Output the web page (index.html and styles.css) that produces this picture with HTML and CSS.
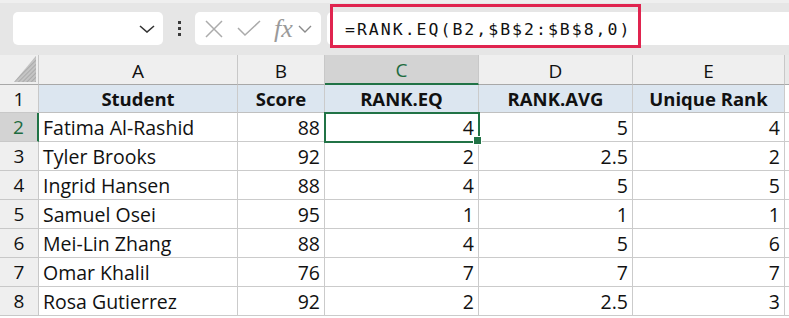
FILE: index.html
```html
<!DOCTYPE html>
<html>
<head>
<meta charset="utf-8">
<link rel="stylesheet" href="styles.css">
</head>
<body>
<div class="toolbar">
  <div class="namebox">
    <svg class="chev" width="16" height="8" viewBox="0 0 16 8"><path d="M1 1 L8 7 L15 1" fill="none" stroke="#333" stroke-width="1.6"/></svg>
  </div>
  <div class="dots"><i></i><i></i><i></i></div>
  <div class="fxgroup">
    <svg width="20" height="20" viewBox="0 0 20 20"><path d="M2 2 L18 18 M18 2 L2 18" stroke="#ababab" stroke-width="1.5" fill="none"/></svg>
    <svg width="24" height="20" viewBox="0 0 24 20"><path d="M1 9 L8 16 L23 2" stroke="#ababab" stroke-width="1.5" fill="none"/></svg>
    <span class="fx">fx</span>
    <svg width="14" height="8" viewBox="0 0 14 8"><path d="M1 1 L7 7 L13 1" fill="none" stroke="#8a8a8a" stroke-width="1.4"/></svg>
  </div>
  <div class="formula">
    <span class="ftext">=RANK.EQ(B2,$B$2:$B$8,0)</span>
    <div class="highlight"></div>
  </div>
</div>
<div class="sheet">
  <div class="corner"><svg width="22" height="26" viewBox="0 0 22 26"><defs><pattern id="h" width="3" height="3" patternUnits="userSpaceOnUse" patternTransform="rotate(45)"><rect width="3" height="3" fill="#c4c4c4"/><rect width="1" height="3" fill="#ababab"/></pattern></defs><path d="M22 0 L22 26 L0 26 Z" fill="url(#h)"/></svg></div>
  <div class="ch">A</div><div class="ch">B</div><div class="ch sel">C</div><div class="ch">D</div><div class="ch">E</div><div class="ch end"></div>

  <div class="rh">1</div>
  <div class="c hd">Student</div><div class="c hd">Score</div><div class="c hd">RANK.EQ</div><div class="c hd">RANK.AVG</div><div class="c hd">Unique Rank</div><div class="c end"></div>

  <div class="rh sel">2</div>
  <div class="c">Fatima Al-Rashid</div><div class="c n">88</div><div class="c n active">4</div><div class="c n">5</div><div class="c n">4</div><div class="c end"></div>

  <div class="rh">3</div>
  <div class="c">Tyler Brooks</div><div class="c n">92</div><div class="c n">2</div><div class="c n">2.5</div><div class="c n">2</div><div class="c end"></div>

  <div class="rh">4</div>
  <div class="c">Ingrid Hansen</div><div class="c n">88</div><div class="c n">4</div><div class="c n">5</div><div class="c n">5</div><div class="c end"></div>

  <div class="rh">5</div>
  <div class="c">Samuel Osei</div><div class="c n">95</div><div class="c n">1</div><div class="c n">1</div><div class="c n">1</div><div class="c end"></div>

  <div class="rh">6</div>
  <div class="c">Mei-Lin Zhang</div><div class="c n">88</div><div class="c n">4</div><div class="c n">5</div><div class="c n">6</div><div class="c end"></div>

  <div class="rh">7</div>
  <div class="c">Omar Khalil</div><div class="c n">76</div><div class="c n">7</div><div class="c n">7</div><div class="c n">7</div><div class="c end"></div>

  <div class="rh">8</div>
  <div class="c">Rosa Gutierrez</div><div class="c n">92</div><div class="c n">2</div><div class="c n">2.5</div><div class="c n">3</div><div class="c end"></div>
</div>
</body>
</html>
```
FILE: styles.css
```css
* { box-sizing: border-box; }
html, body { margin: 0; padding: 0; background: #ffffff; }
body { width: 789px; height: 318px; overflow: hidden; font-family: "Open Sans", Lato, sans-serif; }

.toolbar {
  height: 55px;
  background: #e6e6e6;
  border-top: 3px solid #efefef;
  display: flex;
  align-items: flex-start;
  padding-top: 9px;
  padding-left: 13px;
}
.namebox {
  width: 150px; height: 33px;
  background: #fff;
  border-radius: 5px;
  display: flex; align-items: center; justify-content: flex-end;
  padding-right: 8px;
}
.dots {
  width: 32px; height: 33px;
  display: flex; flex-direction: column; align-items: center; justify-content: center; gap: 3px;
}
.dots i { display: block; width: 3px; height: 3px; background: #3a3a3a; }
.fxgroup {
  width: 126px; height: 33px;
  background: #fff;
  border-radius: 5px;
  display: flex; align-items: center;
  padding-left: 9px; gap: 0;
}
.fxgroup svg:nth-child(1) { margin-right: 13px; }
.fxgroup svg:nth-child(2) { margin-right: 13px; }
.fx {
  font-family: "Liberation Serif", "DejaVu Serif", serif;
  font-style: italic;
  font-size: 26px;
  color: #9a9a9a;
  margin-right: 5px;
  line-height: 20px;
}
.formula {
  position: relative;
  flex: 1;
  margin-left: 6px;
  height: 33px;
  background: #fff;
  border-radius: 5px 0 0 5px;
  display: flex; align-items: center;
}
.ftext {
  font-family: "DejaVu Sans Mono", "Liberation Mono", monospace;
  font-size: 16.5px;
  letter-spacing: 2px;
  color: #111;
  margin-left: 18px;
  padding-top: 1px;
}
.highlight {
  position: absolute;
  left: 3px; top: -8px;
  width: 311px; height: 44px;
  border: 3px solid #e0244f;
}

.sheet {
  display: grid;
  grid-template-columns: 39px 199px 87px 154px 154px 152px 4px;
  grid-template-rows: 30px 28px repeat(7, 29px);
  font-size: 19.5px;
  color: #111;
}
.corner, .ch, .rh {
  background: #efefef;
  border-right: 1px solid #c8c8c8;
  border-bottom: 1px solid #c8c8c8;
}
.corner { display: flex; align-items: flex-end; justify-content: flex-end; padding: 0 2px 2px 0; border-bottom: 1px solid #a8a8a8; }
.ch {
  display: flex; align-items: center; justify-content: center;
  font-size: 19px; color: #111; padding-top: 2px;
  border-bottom: 1px solid #a8a8a8;
}
.ch.sel { background: #d3d3d3; color: #1d6b40; border-bottom: 2px solid #217346; }
.ch.end { background: #e9e9e9; border-right: none; }
.rh {
  display: flex; align-items: center; justify-content: center;
  padding-top: 1px;
  font-size: 19px;
  line-height: 1;
}
.rh.sel { background: #d3d3d3; color: #1d6b40; border-right: 2px solid #217346; }
.c {
  border-right: 1px solid #cbcbcb;
  border-bottom: 1px solid #cbcbcb;
  display: flex; align-items: center;
  padding: 1px 4px 0 4px;
  white-space: nowrap;
  background: #fff;
  line-height: 1;
}
.c.end { border-right: none; background: #fff; padding: 0; }
.c.hd { background: #dce6f0; font-weight: bold; font-size: 18.5px; justify-content: center; border-bottom-color: #c0c0c0; }
.c.n { justify-content: flex-end; }
.c.active {
  position: relative;
  outline: 2px solid #217346;
  outline-offset: -1px;
}
.c.active::after {
  content: "";
  position: absolute;
  right: -4px; bottom: -4px;
  width: 7px; height: 7px;
  background: #217346;
  border: 1px solid #fff;
}
```
